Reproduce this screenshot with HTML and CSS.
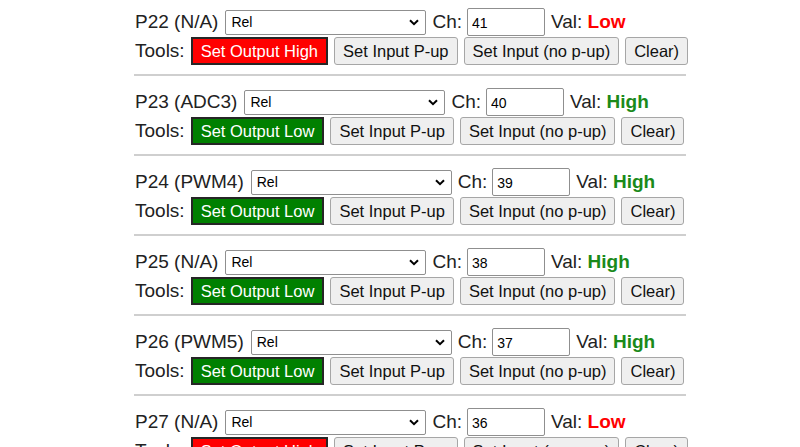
FILE: index.html
```html
<!DOCTYPE html>
<html>
<head>
<meta charset="utf-8">
<link rel="stylesheet" href="styles.css">
</head>
<body>
<div class="pins">
  <div class="pin">
    <div class="row">
      <span class="name">P22 (N/A)</span>
      <span class="selwrap"><select class="sel"><option>Rel</option></select><svg class="chev" width="10" height="7" viewBox="0 0 10 7"><path d="M1 1.2 L5 5.2 L9 1.2" fill="none" stroke="#000" stroke-width="2"/></svg></span>
      <span>Ch:</span>
      <input class="ch" type="text" value="41">
      <span>Val: <b class="low">Low</b></span>
    </div>
    <div class="row">
      <span>Tools:</span>
      <button class="btn out-high">Set Output High</button>
      <button class="btn">Set Input P-up</button>
      <button class="btn">Set Input (no p-up)</button>
      <button class="btn">Clear)</button>
    </div>
    <hr class="sep">
  </div>
  <div class="pin">
    <div class="row">
      <span class="name">P23 (ADC3)</span>
      <span class="selwrap"><select class="sel"><option>Rel</option></select><svg class="chev" width="10" height="7" viewBox="0 0 10 7"><path d="M1 1.2 L5 5.2 L9 1.2" fill="none" stroke="#000" stroke-width="2"/></svg></span>
      <span>Ch:</span>
      <input class="ch" type="text" value="40">
      <span>Val: <b class="high">High</b></span>
    </div>
    <div class="row">
      <span>Tools:</span>
      <button class="btn out-low">Set Output Low</button>
      <button class="btn">Set Input P-up</button>
      <button class="btn">Set Input (no p-up)</button>
      <button class="btn">Clear)</button>
    </div>
    <hr class="sep">
  </div>
  <div class="pin">
    <div class="row">
      <span class="name">P24 (PWM4)</span>
      <span class="selwrap"><select class="sel"><option>Rel</option></select><svg class="chev" width="10" height="7" viewBox="0 0 10 7"><path d="M1 1.2 L5 5.2 L9 1.2" fill="none" stroke="#000" stroke-width="2"/></svg></span>
      <span>Ch:</span>
      <input class="ch" type="text" value="39">
      <span>Val: <b class="high">High</b></span>
    </div>
    <div class="row">
      <span>Tools:</span>
      <button class="btn out-low">Set Output Low</button>
      <button class="btn">Set Input P-up</button>
      <button class="btn">Set Input (no p-up)</button>
      <button class="btn">Clear)</button>
    </div>
    <hr class="sep">
  </div>
  <div class="pin">
    <div class="row">
      <span class="name">P25 (N/A)</span>
      <span class="selwrap"><select class="sel"><option>Rel</option></select><svg class="chev" width="10" height="7" viewBox="0 0 10 7"><path d="M1 1.2 L5 5.2 L9 1.2" fill="none" stroke="#000" stroke-width="2"/></svg></span>
      <span>Ch:</span>
      <input class="ch" type="text" value="38">
      <span>Val: <b class="high">High</b></span>
    </div>
    <div class="row">
      <span>Tools:</span>
      <button class="btn out-low">Set Output Low</button>
      <button class="btn">Set Input P-up</button>
      <button class="btn">Set Input (no p-up)</button>
      <button class="btn">Clear)</button>
    </div>
    <hr class="sep">
  </div>
  <div class="pin">
    <div class="row">
      <span class="name">P26 (PWM5)</span>
      <span class="selwrap"><select class="sel"><option>Rel</option></select><svg class="chev" width="10" height="7" viewBox="0 0 10 7"><path d="M1 1.2 L5 5.2 L9 1.2" fill="none" stroke="#000" stroke-width="2"/></svg></span>
      <span>Ch:</span>
      <input class="ch" type="text" value="37">
      <span>Val: <b class="high">High</b></span>
    </div>
    <div class="row">
      <span>Tools:</span>
      <button class="btn out-low">Set Output Low</button>
      <button class="btn">Set Input P-up</button>
      <button class="btn">Set Input (no p-up)</button>
      <button class="btn">Clear)</button>
    </div>
    <hr class="sep">
  </div>
  <div class="pin">
    <div class="row">
      <span class="name">P27 (N/A)</span>
      <span class="selwrap"><select class="sel"><option>Rel</option></select><svg class="chev" width="10" height="7" viewBox="0 0 10 7"><path d="M1 1.2 L5 5.2 L9 1.2" fill="none" stroke="#000" stroke-width="2"/></svg></span>
      <span>Ch:</span>
      <input class="ch" type="text" value="36">
      <span>Val: <b class="low">Low</b></span>
    </div>
    <div class="row">
      <span>Tools:</span>
      <button class="btn out-high">Set Output High</button>
      <button class="btn">Set Input P-up</button>
      <button class="btn">Set Input (no p-up)</button>
      <button class="btn">Clear)</button>
    </div>
    <hr class="sep">
  </div>
</div>
</body>
</html>
```

FILE: styles.css
```css
html, body {
  margin: 0;
  padding: 0;
  background: #ffffff;
  overflow: hidden;
}
body {
  font-family: "Liberation Sans", Arial, sans-serif;
  font-size: 19px;
  color: #222;
}
.pins {
  width: 552px;
  margin-left: 134px;
  padding-top: 8px;
}
.pin {
  display: flex;
  flex-direction: column;
}
.row {
  display: flex;
  align-items: center;
  gap: 6px;
  height: 28px;
  padding-left: 1px;
  white-space: nowrap;
}
.row > * {
  flex-shrink: 0;
}
.row + .row {
  margin-top: 1px;
}
.selwrap {
  position: relative;
  display: inline-block;
  height: 25px;
  margin-left: 1px;
}
.sel {
  appearance: none;
  -webkit-appearance: none;
  width: 201px;
  height: 25px;
  border: 1px solid #8f8f8f;
  border-radius: 2px;
  background: #fff;
  font-family: "Liberation Sans", Arial, sans-serif;
  font-size: 14px;
  color: #000;
  padding: 0 0 0 5px;
  margin: 0;
}
.chev {
  position: absolute;
  right: 7px;
  top: 9px;
  pointer-events: none;
}
.ch {
  width: 78px;
  height: 28px;
  box-sizing: border-box;
  border: 1px solid #8f8f8f;
  border-radius: 2px;
  font-family: "Liberation Sans", Arial, sans-serif;
  font-size: 14px;
  padding: 2px 4px 0;
  margin: 0 0 0 -1px;
  color: #000;
}
.low { color: #ff0000; }
.high { color: #1a8a1a; }
.btn {
  height: 28px;
  box-sizing: border-box;
  font-family: "Liberation Sans", Arial, sans-serif;
  font-size: 16.5px;
  color: #111;
  background: #efefef;
  border: 1px solid #a6a6a6;
  border-radius: 3px;
  padding: 0 8px;
  margin: 0;
  white-space: nowrap;
}
.out-high {
  background: #ff0000;
  color: #fff;
  border: 2px solid #262626;
  border-radius: 0;
}
.out-low {
  background: #008000;
  color: #fff;
  border: 2px solid #262626;
  border-radius: 0;
}
.sep {
  border: 0;
  border-top: 2px solid #cfcfcf;
  margin: 9px 0 12px;
  height: 0;
}
```
